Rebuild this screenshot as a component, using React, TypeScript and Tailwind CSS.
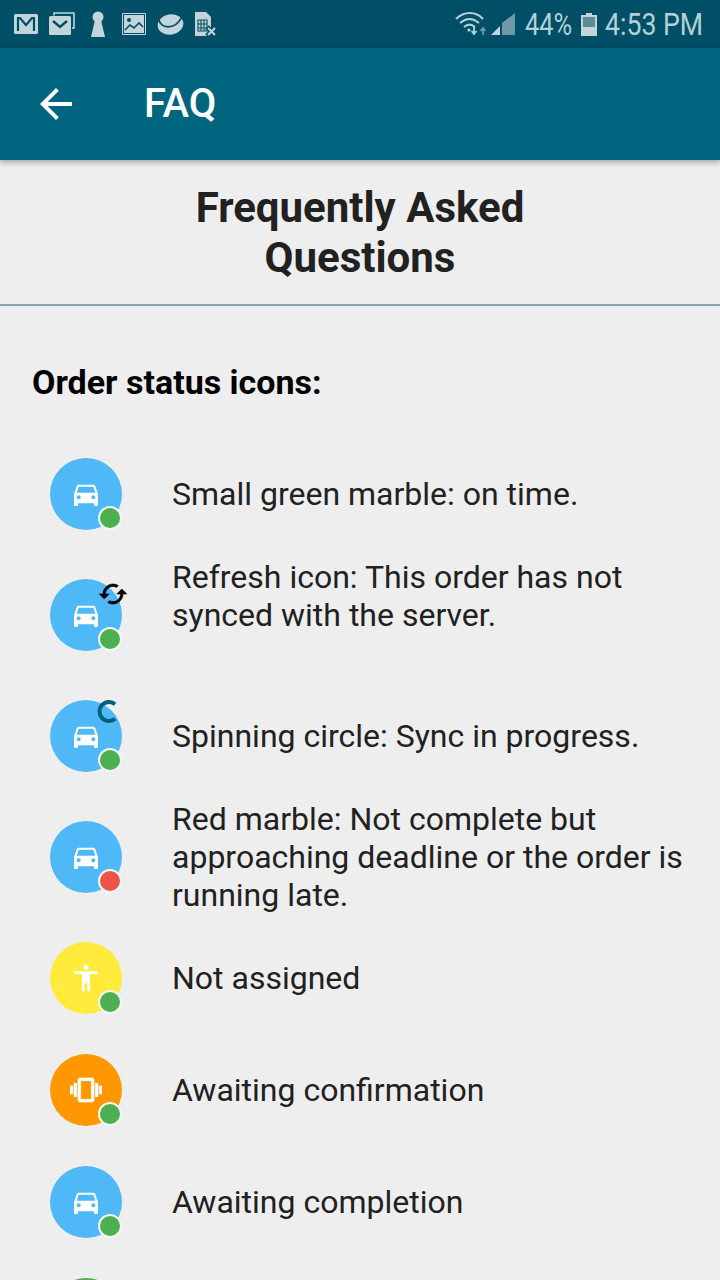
import React from 'react'
import { MdAccessibility, MdArrowBack, MdDirectionsCar } from 'react-icons/md'

function StatusIcons() {
  return (
    <div className="flex items-center text-[#c3d5da]">
      {/* gmail */}
      <svg width="24" height="20" viewBox="0 0 24 20">
        <rect x="0" y="0" width="24" height="20" rx="1.5" fill="currentColor" />
        <path d="M4 17V4h2l6 7 6-7h2v13" fill="none" stroke="#004f66" strokeWidth="2.2" />
      </svg>
      {/* stacked mail */}
      <svg width="26" height="24" viewBox="0 0 26 24" className="ml-[11px]">
        <path d="M5 3.500V1h20v15h-2" fill="none" stroke="currentColor" strokeWidth="1.6" />
        <rect x="0" y="4" width="22" height="19" rx="1.5" fill="currentColor" />
        <path d="M4 9l7 6 7-6" fill="none" stroke="#004f66" strokeWidth="2.4" />
      </svg>
      {/* keyhole */}
      <svg width="14" height="26" viewBox="0 0 14 26" className="ml-4">
        <circle cx="7" cy="6" r="5.500" fill="currentColor" />
        <path d="M4 9h6l4 17H0z" fill="currentColor" />
      </svg>
      {/* picture */}
      <svg width="24" height="22" viewBox="0 0 24 22" className="ml-[17px]">
        <rect x="0" y="0" width="24" height="22" rx="1" fill="currentColor" />
        <rect x="1.500" y="1.500" width="21" height="19" fill="none" stroke="#004f66" strokeWidth="1" />
        <circle cx="7" cy="7" r="2" fill="#004f66" />
        <path d="M3 17l5-5 4 3 5-5 4 4" fill="none" stroke="#004f66" strokeWidth="1.6" />
      </svg>
      {/* planet */}
      <svg width="27" height="23" viewBox="0 0 28 24" className="ml-[11px]">
        <ellipse cx="14" cy="12" rx="13.500" ry="10.500" fill="currentColor" transform="rotate(-10 14 12)" />
        <path d="M2 7c1 9 16 12 24-3" fill="none" stroke="#004f66" strokeWidth="1.800" />
      </svg>
      {/* no sim */}
      <svg width="22" height="24" viewBox="0 0 22 24" className="ml-[11px]">
        <path d="M0 0h11l5 5v19H0z" fill="currentColor" />
        <path d="M3 8h9v11H3zM6 8v11M9 8v11M3 12h9M3 16h9" fill="none" stroke="#004f66" strokeWidth="1.1" />
        <path d="M12 15l9 9M21 15l-9 9" stroke="#004f66" strokeWidth="5" />
        <path d="M13 16l7 7M20 16l-7 7" stroke="currentColor" strokeWidth="2" />
      </svg>
    </div>
  )
}

function StatusRight() {
  return (
    <div className="flex items-center text-[#b4d0d8]">
      <svg width="32" height="24" viewBox="0 0 32 24" className="mr-1">
        <path d="M1 7c8-8 20-8 27 0M5 11c6-5 13-5 19 0M9 15c3.500-3 7.500-3 11 0" fill="none" stroke="currentColor" strokeWidth="2" />
        <circle cx="14" cy="18" r="1.600" fill="currentColor" />
        <path d="M19 15v6M16.500 19l2.500 3 2.500-3" fill="none" stroke="currentColor" strokeWidth="1.800" />
        <path d="M28 23v-6M25.500 19l2.500-3 2.500 3" fill="none" stroke="#6d9aa6" strokeWidth="1.800" />
      </svg>
      <svg width="24" height="22" viewBox="0 0 24 22" className="mr-[10px]">
        <path d="M24 0v22H11V10z" fill="#6d9aa6" />
        <path d="M0 22l9-9v9z" fill="#c3d5da" />
      </svg>
      <span className="w-[47px] text-[31px] leading-none origin-left scale-x-[0.82] whitespace-nowrap">44%</span>
      <svg width="16" height="23" viewBox="0 0 16 23" className="ml-[9px] mr-2">
        <path d="M5 0h6v2h5v21H0V2h5z" fill="#c3d5da" />
        <rect x="2" y="4" width="12" height="10" fill="#5e8997" />
      </svg>
      <span className="w-[99px] text-[31px] leading-none origin-left scale-x-[0.86] whitespace-nowrap">4:53 PM</span>
    </div>
  )
}

function Spinner() {
  return (
    <svg width="24" height="24" viewBox="0 0 24 24" className="absolute left-[47px] top-0">
      <path d="M18.100 4.200A9.500 9.500 0 1 0 18.100 18.800" fill="none" stroke="#00607a" strokeWidth="4" />
    </svg>
  )
}

function RefreshIcon() {
  return (
    <svg width="30" height="30" viewBox="0 0 24 24" fill="#000" stroke="#000" strokeWidth="0.5" className="absolute left-[48px] top-0">
      <path d="M19 8l-4 4h3c0 3.310-2.690 6-6 6-1.010 0-1.970-.25-2.800-.7l-1.460 1.460C8.970 19.540 10.430 20 12 20c4.420 0 8-3.580 8-8h3l-4-4zM6 12c0-3.310 2.690-6 6-6 1.010 0 1.970.25 2.800.7l1.460-1.460C15.030 4.460 13.570 4 12 4c-4.420 0-8 3.580-8 8H1l4 4 4-4H6z" />
    </svg>
  )
}

function VibrationIcon() {
  return (
    <svg width="32" height="32" viewBox="0 0 24 24" fill="#fff" stroke="#fff" strokeWidth="0.5">
      <path d="M0 15h2V9H0v6zm3 2h2V7H3v10zm19-8v6h2V9h-2zm-3 8h2V7h-2v10zM16.500 3h-9C6.670 3 6 3.670 6 4.500v15c0 .83.670 1.500 1.500 1.500h9c.83 0 1.500-.67 1.500-1.500v-15c0-.83-.67-1.500-1.500-1.500zM16 19H8V5h8v14z" />
    </svg>
  )
}

type Row = {
  color: string
  icon: React.ReactNode
  dot?: string
  overlay?: React.ReactNode
  text?: string
  textClass?: string
  gap: string
}

const car = <MdDirectionsCar size={32} color="#fff" />

const rows: Row[] = [
  { color: 'bg-[#4fb9f7]', icon: car, text: 'Small green marble: on time.', gap: 'mb-[49px]' },
  {
    color: 'bg-[#4fb9f7]',
    icon: car,
    text: 'Refresh icon: This order has not synced with the server.',
    textClass: 'mb-[38px]',
    gap: 'mb-[49px]',
    overlay: <RefreshIcon />,
  },
  { color: 'bg-[#4fb9f7]', icon: car, text: 'Spinning circle: Sync in progress.', gap: 'mb-[49px]', overlay: <Spinner /> },
  {
    color: 'bg-[#4fb9f7]',
    icon: car,
    dot: 'bg-[#ea5345]',
    text: 'Red marble: Not complete but approaching deadline or the order is running late.',
    gap: 'mb-[49px]',
  },
  { color: 'bg-[#ffeb3b]', icon: <MdAccessibility size={32} color="#fff" />, text: 'Not assigned', gap: 'mb-10' },
  { color: 'bg-[#ff9800]', icon: <VibrationIcon />, text: 'Awaiting confirmation', gap: 'mb-10' },
  { color: 'bg-[#4fb9f7]', icon: car, text: 'Awaiting completion', gap: 'mb-10' },
  { color: 'bg-[#4caf50]', icon: null, gap: 'mb-10' },
]

function FaqRow({ row }: { row: Row }) {
  return (
    <div className={`flex h-[72px] items-center ${row.gap}`}>
      <div className={`relative flex h-[72px] w-[72px] flex-none items-center justify-center rounded-full ${row.color}`}>
        {row.icon}
        <span className={`absolute bottom-0 right-0 h-6 w-6 rounded-full border-2 border-[#f1f8f1] ${row.dot ?? 'bg-[#4caf50]'}`} />
        {row.overlay}
      </div>
      {row.text && (
        <p className={`ml-[50px] w-[516px] text-[32px] leading-[38px] text-[#212121] ${row.textClass ?? ''}`}>
          {row.text}
        </p>
      )}
    </div>
  )
}

export default function App() {
  return (
    <div className="h-[1280px] w-[720px] overflow-hidden bg-[#eeeeee] font-['Roboto',sans-serif]">
      <div className="flex h-12 items-center justify-between bg-[#004f66] pl-[14px] pr-[16px]">
        <StatusIcons />
        <StatusRight />
      </div>
      <header className="relative flex h-28 items-center bg-[#00667f] pl-8 shadow-[0_2px_6px_rgba(0,0,0,0.35)]">
        <MdArrowBack size={48} color="#fff" />
        <h1 className="ml-16 text-[40px] font-medium leading-none text-white">FAQ</h1>
      </header>
      <div className="border-b-2 border-[#90a4ae] pb-[21px] pt-[23px] text-center text-[42px] font-bold leading-[50px] text-[#212121]">
        Frequently Asked
        <br />
        Questions
      </div>
      <h2 className="pl-8 pt-[56px] text-[34px] font-bold leading-[40px] text-black">Order status icons:</h2>
      <div className="pl-[50px] pt-[56px]">
        {rows.map((row, i) => (
          <FaqRow key={i} row={row} />
        ))}
      </div>
    </div>
  )
}
